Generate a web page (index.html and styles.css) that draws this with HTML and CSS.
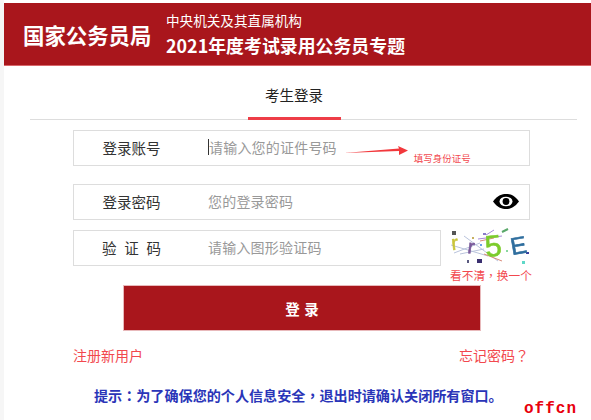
FILE: index.html
```html
<!DOCTYPE html>
<html>

<head lang="zh">
    <meta charset="utf-8" />
    <title>考生登录</title>
    <link rel="stylesheet" href="styles.css">
</head>

<body>
    <header class="top-bar">
        <div class="org">国家公务员局</div>
        <div class="titles">
            <p class="sub-title">中央机关及其直属机构</p>
            <p class="main-title">2021年度考试录用公务员专题</p>
        </div>
    </header>

    <div class="tabs">
        <span class="tab">考生登录</span>
    </div>

    <form class="login">
        <div class="row">
            <label>登录账号</label>
            <span class="caret"></span>
            <span class="hint">请输入您的证件号码</span>
            <svg class="arrow" width="64" height="14" viewBox="0 0 64 14">
                <polygon points="0,9 55,4.5 54,2 64,6.5 55,11 55,7" fill="#f2383c" />
            </svg>
            <span class="note">填写身份证号</span>
        </div>
        <div class="row row-second">
            <label>登录密码</label>
            <span class="hint">您的登录密码</span>
            <svg class="eye" width="26" height="15" viewBox="0 0 26 15">
                <path d="M0 7.5 C5 1 9 0 13 0 C17 0 21 1 26 7.5 C21 14 17 15 13 15 C9 15 5 14 0 7.5 Z" fill="#000" />
                <ellipse cx="13" cy="7.5" rx="6.5" ry="4.8" fill="#fff" />
                <circle cx="13" cy="7.5" r="3.4" fill="#000" />
            </svg>
        </div>
        <div class="captcha-row">
            <div class="row row-code">
                <label class="spaced">验 证 码</label>
                <span class="hint">请输入图形验证码</span>
            </div>
            <div class="captcha">
                <svg width="82" height="36" viewBox="0 0 82 36">
                    <g fill="none" stroke-width="1">
                        <path d="M1 17 L38 28 M4 25 L30 15 M14 8 L48 33 M10 26 L34 21" stroke="#b9c3dc" />
                        <path d="M28 11 L52 8 M36 7 L44 2" stroke="#a78ad8" />
                        <path d="M34 26 L52 33 M30 13 L44 10" stroke="#d98a7a" />
                        <path d="M52 4 L58 1" stroke="#5aa86a" stroke-width="2" />
                    </g>
                    <rect x="2" y="3" width="4" height="4" fill="#555" />
                    <rect x="27" y="31" width="5" height="4" fill="#3a2f70" />
                    <rect x="17" y="32" width="2" height="3" fill="#5a5a80" />
                    <rect x="72" y="33" width="3" height="3" fill="#5fd8c8" />
                    <rect x="76" y="24" width="3" height="2" fill="#3a3fa0" />
                    <rect x="30" y="16" width="2" height="2" fill="#6aa0e8" />
                    <rect x="56" y="22" width="2" height="2" fill="#8ad8a0" />
                    <rect x="22" y="9" width="2" height="2" fill="#c8b060" />
                    <rect x="33" y="5" width="3" height="2" fill="#8a7ac8" />
                    <text class="cap-r1" x="2" y="22" transform="rotate(-6 2 22)">r</text>
                    <text class="cap-r2" x="17" y="25" transform="rotate(8 17 25)">r</text>
                    <text class="cap-5" x="36" y="29" transform="rotate(-6 36 29)">5</text>
                    <text class="cap-e" x="62" y="27" transform="rotate(-10 62 27)">E</text>
                </svg>
                <a class="refresh">看不清<span class="punct">，</span>换一个</a>
            </div>
        </div>
        <button class="submit" type="button">登 录</button>
        <div class="links">
            <a>注册新用户</a>
            <a>忘记密码<span class="punct">？</span></a>
        </div>
    </form>

    <p class="tip">提示<span class="punct">：</span>为了确保您的个人信息安全<span class="punct">，</span>退出时请确认关闭所有窗口。</p>
    <div class="watermark">offcn</div>
</body>

</html>
```
FILE: styles.css
```css
html,
body {
    margin: 0;
    height: 420px;
    overflow: hidden;
}

body {
    position: relative;
    background-color: #fff;
    box-shadow: inset 4px 0 0 #f6f6f6;
    font-family: "Noto Sans CJK SC", "Liberation Sans", sans-serif;
}

.punct {
    font-family: "Noto Sans CJK TC", sans-serif;
}

.top-bar {
    display: flex;
    align-items: center;
    height: 62px;
    margin: 3px 0 0 4px;
    padding-left: 19px;
    background-color: #a9161c;
    border-bottom: 1px solid #d9666a;
    color: #fff;
}

.org {
    width: 143px;
    font-size: 21.4px;
    font-weight: 700;
    white-space: nowrap;
}

.titles p {
    margin: 0;
    white-space: nowrap;
}

.sub-title {
    font-size: 13.6px;
    line-height: 20px;
    margin-bottom: 2px !important;
}

.main-title {
    font-size: 17.9px;
    font-weight: 700;
    line-height: 26px;
}

.tabs {
    display: flex;
    justify-content: center;
    height: 53px;
    margin: 0 14px 0 30px;
    border-bottom: 1px solid #ddd;
}

.tab {
    width: 93px;
    height: 51px;
    line-height: 58px;
    margin-left: -19px;
    text-align: center;
    font-size: 14.5px;
    color: #222;
    border-bottom: 3px solid #ee3d47;
}

.login {
    width: 457px;
    margin: 10px 0 0 73px;
}

.row {
    display: flex;
    align-items: center;
    box-sizing: border-box;
    height: 36px;
    padding-bottom: 2px;
    border: 1px solid #ddd;
}

.row-second {
    margin-top: 18px;
}

.row label {
    width: 115px;
    flex: none;
    margin-right: 19px;
    text-align: center;
    font-size: 14.5px;
    color: #333;
}

.row .spaced {
    word-spacing: 4.5px;
}

.hint {
    font-size: 14px;
    letter-spacing: 0.2px;
    color: #999;
    white-space: nowrap;
}

.caret {
    width: 1px;
    height: 16px;
    background-color: #333;
}

.arrow {
    margin: 8px 0 0 7px;
}

.note {
    margin: 22px 0 0 6px;
    font-size: 9.5px;
    color: #f2484e;
    white-space: nowrap;
}

.eye {
    margin-left: auto;
    margin-right: 10px;
}

.captcha-row {
    display: flex;
    margin-top: 10px;
}

.row-code {
    width: 368px;
    flex: none;
}

.captcha {
    width: 82px;
    margin: -2px 0 0 9px;
}

.captcha svg {
    display: block;
    overflow: visible;
    filter: blur(0.4px);
}

.cap-r1,
.cap-r2,
.cap-5,
.cap-e {
    font-family: "Liberation Sans", sans-serif;
    stroke-width: 0.6px;
}

.cap-r1 {
    font-size: 20px;
    fill: #c9c43c;
    stroke: #c9c43c;
}

.cap-r2 {
    font-size: 20px;
    fill: #7a5a9a;
    stroke: #7a5a9a;
}

.cap-5 {
    font-size: 30px;
    fill: #7ccc2c;
    stroke: #7ccc2c;
}

.cap-e {
    font-size: 24px;
    fill: #2f6e9e;
    stroke: #2f6e9e;
}

.refresh {
    display: block;
    margin-top: 2px;
    font-size: 11.7px;
    color: #f2484e;
    white-space: nowrap;
}

.submit {
    display: block;
    box-sizing: border-box;
    width: 358px;
    height: 46px;
    margin: 2px 0 0 50px;
    border: 1px solid #e8b9bb;
    background-color: #a9161c;
    color: #fff;
    font-family: inherit;
    font-size: 14.5px;
    font-weight: 700;
    word-spacing: 1px;
}

.links {
    display: flex;
    justify-content: space-between;
    width: 456px;
    margin-top: 14px;
    font-size: 14px;
    line-height: 20px;
    color: #f2484e;
}

.tip {
    margin: 20px 0 0 94px;
    font-size: 14.1px;
    font-weight: 700;
    line-height: 20px;
    color: #2a35b8;
    white-space: nowrap;
}

.watermark {
    position: absolute;
    right: 14px;
    bottom: 2px;
    font-family: "Liberation Mono", monospace;
    font-size: 16px;
    font-weight: 700;
    letter-spacing: 1px;
    color: #e8000c;
}
```
